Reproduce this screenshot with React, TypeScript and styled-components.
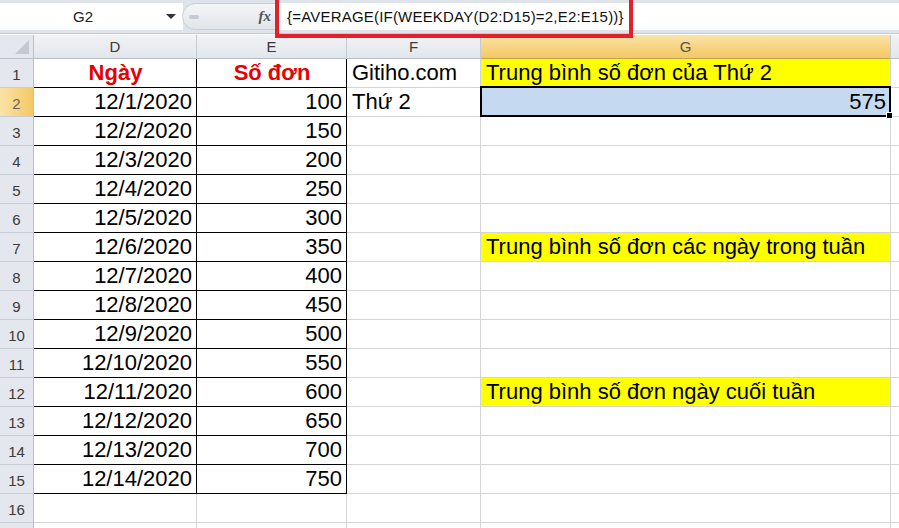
import { ReactElement } from 'react'
import styled, { createGlobalStyle, css } from 'styled-components'

const GlobalStyle = createGlobalStyle`
  html, body {
    margin: 0;
    padding: 0;
    background: #ffffff;
    overflow: hidden;
  }
  body {
    font-family: 'Liberation Sans', Arial, sans-serif;
  }
`

const Page = styled.div`
  position: relative;
  width: 899px;
  height: 528px;
  overflow: hidden;
  background: #ffffff;
`

// formula bar
const FormulaBar = styled.div`
  display: flex;
  align-items: stretch;
  height: 27px;
  padding: 3px 0 3px 0;
  background: #dfe4ea;
  border-bottom: 1px solid #c5cbd3;
`

const NameBox = styled.div`
  display: flex;
  align-items: center;
  width: 183px;
  background: #ffffff;
  font-size: 15px;
  color: #222;
`

const NameText = styled.span`
  flex: 1;
  text-align: center;
`

const DropArrow = styled.span`
  width: 0;
  height: 0;
  margin-right: 7px;
  border-left: 5px solid transparent;
  border-right: 5px solid transparent;
  border-top: 5px solid #333;
`

const Splitter = styled.div`
  display: flex;
  align-items: center;
  justify-content: space-between;
  width: 96px;
  margin-left: -1px;
  background: linear-gradient(#f4f5f7, #e2e5e9);
  border: 1px solid #c9ced6;
  border-radius: 14px 0 0 14px;
  padding: 0 6px 0 6px;
  box-sizing: border-box;
`

const Knob = styled.span`
  width: 10px;
  height: 4px;
  border-radius: 2px;
  background: #c6cbd2;
`

const Fx = styled.span`
  font-family: 'Liberation Serif', serif;
  font-style: italic;
  font-weight: bold;
  font-size: 15px;
  color: #555;
`

const FormulaInput = styled.div`
  flex: 1;
  display: flex;
  align-items: center;
  background: #ffffff;
  padding-left: 8px;
  font-size: 15px;
  letter-spacing: 0.2px;
  color: #111;
  border-left: 1px solid #c9ced6;
`

const Highlight = styled.div`
  position: absolute;
  left: 275px;
  top: -4px;
  width: 358px;
  height: 42px;
  border: 4px solid #e3202b;
  box-sizing: border-box;
  pointer-events: none;
`

// sheet
const Sheet = styled.div`
  display: grid;
  grid-template-columns: 34px 163px 150px 134px 410px 1fr;
  grid-template-rows: 24px;
  grid-auto-rows: 29px;
  margin-top: 1px;
`

const Corner = styled.div`
  position: relative;
  background: #e4e8ee;
  border-right: 1px solid #b8bfc9;
  border-bottom: 1px solid #b8bfc9;
  &::after {
    content: '';
    position: absolute;
    right: 4px;
    bottom: 4px;
    width: 0;
    height: 0;
    border-left: 14px solid transparent;
    border-bottom: 14px solid #c4c9d0;
  }
`

const ColHead = styled.div<{ $active?: boolean }>`
  display: flex;
  align-items: center;
  justify-content: center;
  font-size: 15px;
  color: #3a3a3a;
  background: linear-gradient(#f1f3f6, #e2e6ec);
  border-right: 1px solid #c5cbd3;
  border-bottom: 1px solid #b8bfc9;
  ${(p) =>
    p.$active &&
    css`
      background: linear-gradient(#fbe3a8, #f4c863);
      border-bottom-color: #c7a24e;
      color: #555;
    `}
`

const RowHead = styled.div<{ $active?: boolean }>`
  display: flex;
  align-items: flex-end;
  justify-content: center;
  padding-bottom: 4px;
  box-sizing: border-box;
  font-size: 15px;
  color: #3a3a3a;
  background: #e4e8ee;
  border-right: 1px solid #b8bfc9;
  border-bottom: 1px solid #c9ced6;
  ${(p) =>
    p.$active &&
    css`
      background: linear-gradient(90deg, #fbe3a8, #f4c863);
      color: #666;
    `}
`

const Cell = styled.div<{
  $align?: 'left' | 'right' | 'center'
  $fill?: string
  $boxed?: boolean
  $header?: boolean
}>`
  display: flex;
  align-items: flex-end;
  justify-content: ${(p) =>
    p.$align === 'right' ? 'flex-end' : p.$align === 'center' ? 'center' : 'flex-start'};
  padding: 0 4px 1px 5px;
  box-sizing: border-box;
  font-size: 22px;
  line-height: 27px;
  color: #000;
  white-space: nowrap;
  overflow: visible;
  background: ${(p) => p.$fill || 'transparent'};
  border-right: 1px solid ${(p) => (p.$boxed ? '#000' : '#d4d4d4')};
  border-bottom: 1px solid ${(p) => (p.$boxed ? '#000' : '#d4d4d4')};
  ${(p) =>
    p.$header &&
    css`
      color: #e60000;
      font-weight: bold;
    `}
`

const SelectedCell = styled.div`
  position: relative;
  display: flex;
  align-items: flex-end;
  justify-content: flex-end;
  margin: -2px 0 0 -1px;
  padding: 0 3px 0 4px;
  font-size: 22px;
  line-height: 27px;
  color: #000;
  background: #c5d9f1;
  border: 2px solid #000;
  &::after {
    content: '';
    position: absolute;
    right: -4px;
    bottom: -4px;
    width: 5px;
    height: 5px;
    background: #000;
    border: 1px solid #fff;
  }
`

const YELLOW = '#ffff00'

const rows = Array.from({ length: 14 }, (_, i) => ({
  date: `12/${i + 1}/2020`,
  value: 100 + i * 50
}))

const gNotes: Record<number, string> = {
  1: 'Trung bình số đơn của Thứ 2',
  7: 'Trung bình số đơn các ngày trong tuần',
  12: 'Trung bình số đơn ngày cuối tuần'
}

const fNotes: Record<number, string> = {
  1: 'Gitiho.com',
  2: 'Thứ 2'
}

export default function App(): ReactElement {
  // row 17 is only a sliver at the bottom edge, its number stays hidden
  const rowNumbers = Array.from({ length: 17 }, (_, i) => i + 1)

  return (
    <Page>
      <GlobalStyle />
      <FormulaBar>
        <NameBox>
          <NameText>G2</NameText>
          <DropArrow />
        </NameBox>
        <Splitter>
          <Knob />
          <Fx>fx</Fx>
        </Splitter>
        <FormulaInput>{'{=AVERAGE(IF(WEEKDAY(D2:D15)=2,E2:E15))}'}</FormulaInput>
      </FormulaBar>
      <Highlight />

      <Sheet>
        <Corner />
        <ColHead>D</ColHead>
        <ColHead>E</ColHead>
        <ColHead>F</ColHead>
        <ColHead $active>G</ColHead>
        <ColHead />

        {rowNumbers.map((n) => {
          const data = n >= 2 && n <= 15 ? rows[n - 2] : null
          const inTable = n <= 15
          return [
            <RowHead key={`h${n}`} $active={n === 2}>
              {n < 17 ? n : null}
            </RowHead>,
            <Cell
              key={`d${n}`}
              $align={n === 1 ? 'center' : 'right'}
              $boxed={inTable}
              $header={n === 1}
            >
              {n === 1 ? 'Ngày' : data?.date}
            </Cell>,
            <Cell
              key={`e${n}`}
              $align={n === 1 ? 'center' : 'right'}
              $boxed={inTable}
              $header={n === 1}
            >
              {n === 1 ? 'Số đơn' : data?.value}
            </Cell>,
            <Cell key={`f${n}`}>{fNotes[n]}</Cell>,
            n === 2 ? (
              <SelectedCell key={`g${n}`}>575</SelectedCell>
            ) : (
              <Cell key={`g${n}`} $fill={gNotes[n] ? YELLOW : undefined}>
                {gNotes[n]}
              </Cell>
            ),
            <Cell key={`x${n}`} />
          ]
        })}
      </Sheet>
    </Page>
  )
}
